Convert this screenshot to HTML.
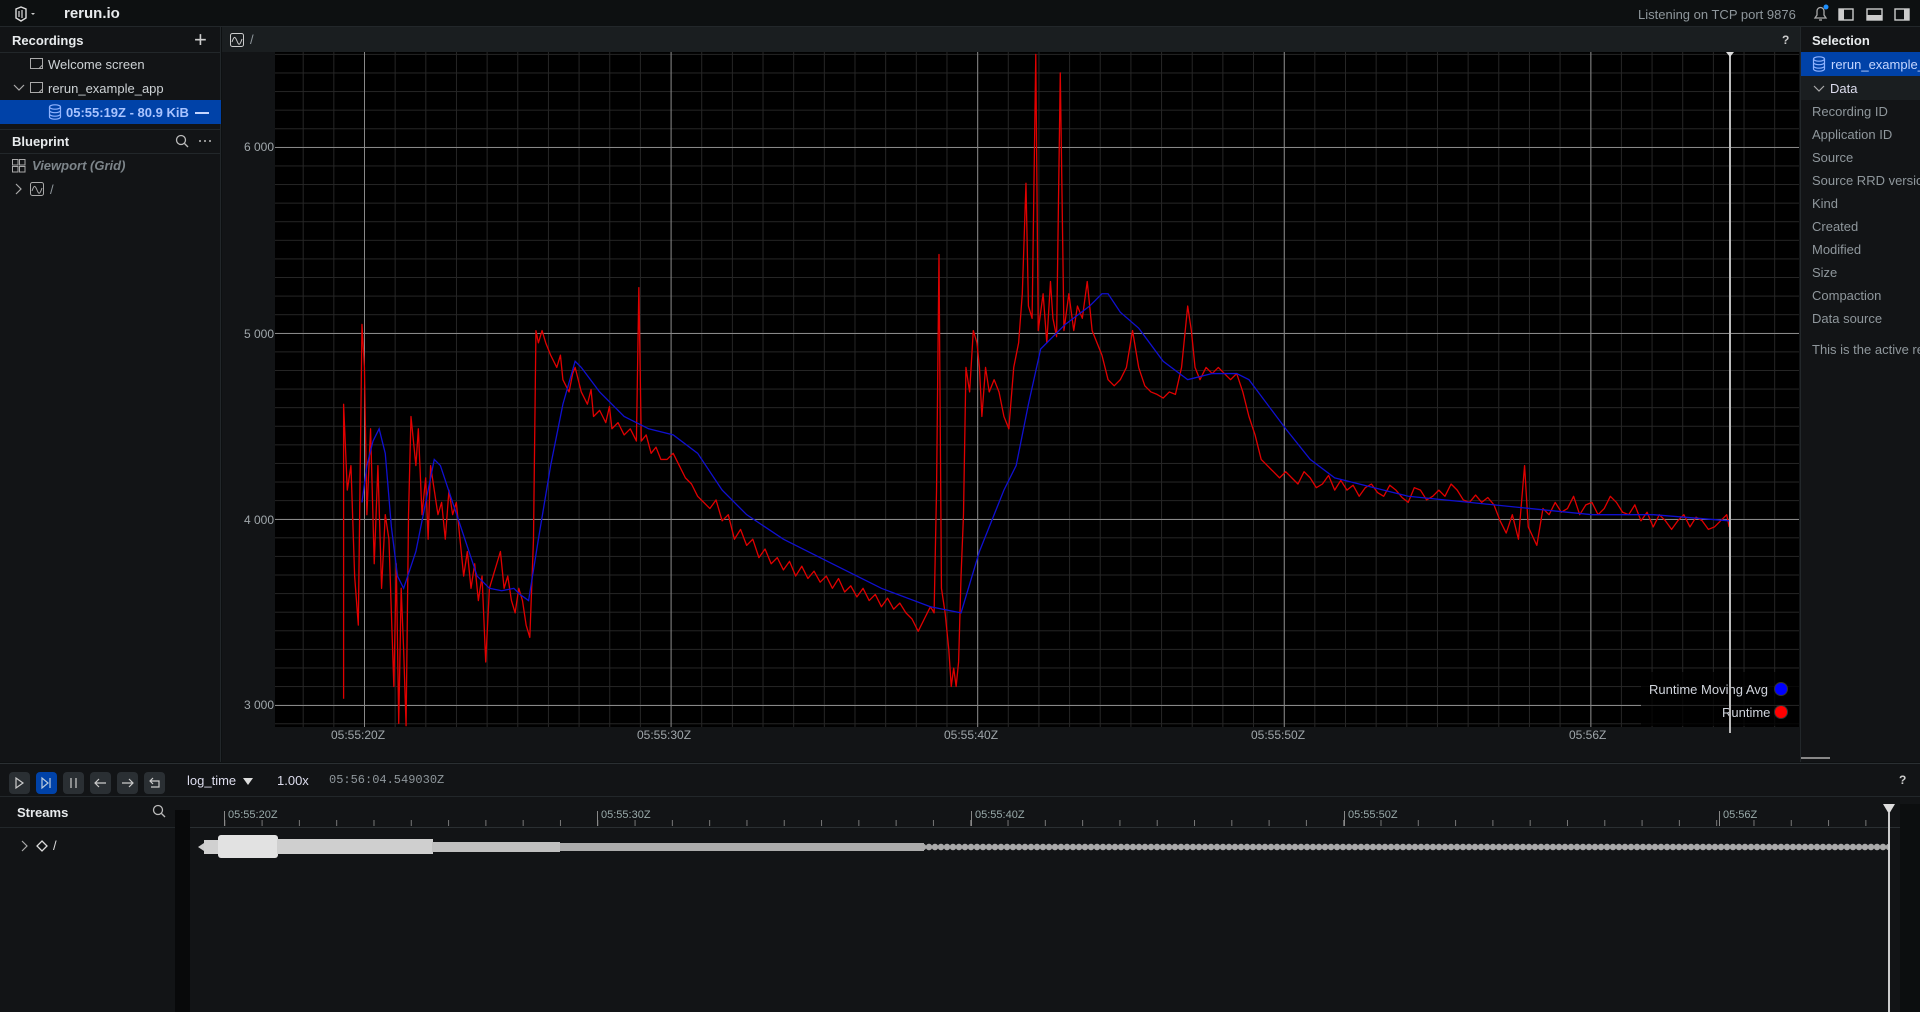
<!DOCTYPE html>
<html><head><meta charset="utf-8"><style>
*{box-sizing:border-box;margin:0;padding:0}
body{width:1920px;height:1012px;overflow:hidden;background:#0d1011;font-family:"Liberation Sans",sans-serif;font-size:13px;color:#cdd2d5;position:relative}
.a{position:absolute}
.t{position:absolute;white-space:nowrap}
.hdr{color:#e8ebed;font-weight:bold}
.dim{color:#8f979c}
</style></head><body>
<!-- top bar -->
<div class="a" style="left:0;top:0;width:1920px;height:27px;background:#0d1011;border-bottom:1px solid #22272a"></div>
<svg class="a" style="left:14px;top:6px" width="24" height="16" viewBox="0 0 24 16"><path d="M2 3l5-2 5 2v9l-5 3-5-3z" fill="none" stroke="#ddd" stroke-width="1.4"/><path d="M5 5v6M8 4v8" stroke="#ddd" stroke-width="1.2"/><path d="M17 7l2 2 2-2z" fill="#ccc"/></svg>
<div class="t hdr" style="left:64px;top:5px;font-size:15px">rerun.io</div>
<div class="t dim" style="left:1638px;top:7px;font-size:13px">Listening on TCP port 9876</div>
<svg class="a" style="left:1810px;top:3px" width="110" height="22" viewBox="0 0 110 22"><path d="M5 15h11l-2-3V8a3.5 3.5 0 0 0-7 0v4z M9 17h3" fill="none" stroke="#aaa" stroke-width="1.3"/><circle cx="16" cy="4" r="2.5" fill="#1e90ff"/><rect x="29" y="6" width="14" height="11" fill="none" stroke="#ccc" stroke-width="1.4"/><rect x="29" y="6" width="5" height="11" fill="#ccc"/><rect x="57" y="6" width="15" height="11" fill="none" stroke="#ccc" stroke-width="1.4"/><rect x="57" y="12" width="15" height="5" fill="#ccc"/><rect x="85" y="6" width="14" height="11" fill="none" stroke="#ccc" stroke-width="1.4"/><rect x="94" y="6" width="5" height="11" fill="#ccc"/></svg>

<!-- left panel -->
<div class="a" style="left:0;top:27px;width:221px;height:735px;background:#121416;border-right:1px solid #22272a"></div>
<div class="a" style="left:0;top:52px;width:221px;height:1px;background:#22272a"></div>
<div class="t hdr" style="left:12px;top:33px">Recordings</div>
<div class="t" style="left:194px;top:27px;font-size:22px;color:#ccc">+</div>
<svg class="a" style="left:30px;top:58px" width="14" height="12"><rect x="0.5" y="0.5" width="12" height="10" fill="none" stroke="#aaa"/><path d="M9 10.5l3.5-3.5" stroke="#aaa"/></svg>
<div class="t" style="left:48px;top:57px">Welcome screen</div>
<svg class="a" style="left:13px;top:83px" width="12" height="10"><path d="M1 2l5 5 5-5" fill="none" stroke="#aaa" stroke-width="1.2"/></svg>
<svg class="a" style="left:30px;top:82px" width="14" height="12"><rect x="0.5" y="0.5" width="12" height="10" fill="none" stroke="#aaa"/><path d="M9 10.5l3.5-3.5" stroke="#aaa"/></svg>
<div class="t" style="left:48px;top:81px">rerun_example_app</div>
<div class="a" style="left:0;top:100px;width:221px;height:24px;background:#0042a8"></div>
<svg class="a" style="left:48px;top:104px" width="14" height="16"><ellipse cx="7" cy="3" rx="5.5" ry="2.2" fill="none" stroke="#8fb3ff" stroke-width="1.2"/><path d="M1.5 3v10c0 1.2 2.5 2.2 5.5 2.2s5.5-1 5.5-2.2V3M1.5 6.5c0 1.2 2.5 2.2 5.5 2.2s5.5-1 5.5-2.2M1.5 10c0 1.2 2.5 2.2 5.5 2.2s5.5-1 5.5-2.2" fill="none" stroke="#8fb3ff" stroke-width="1.2"/></svg>
<div class="t" style="left:66px;top:105px;color:#a9c4ff;font-weight:bold">05:55:19Z - 80.9 KiB</div>
<div class="a" style="left:195px;top:112px;width:14px;height:1.5px;background:#c5d6ff"></div>
<div class="a" style="left:0;top:129px;width:221px;height:1px;background:#22272a"></div>
<div class="a" style="left:0;top:153px;width:221px;height:1px;background:#22272a"></div>
<div class="t hdr" style="left:12px;top:134px">Blueprint</div>
<svg class="a" style="left:174px;top:133px" width="40" height="16"><circle cx="7" cy="7" r="4.5" fill="none" stroke="#bbb" stroke-width="1.3"/><path d="M10.5 10.5l3.5 3.5" stroke="#bbb" stroke-width="1.3"/><circle cx="26" cy="8" r="1" fill="#bbb"/><circle cx="31" cy="8" r="1" fill="#bbb"/><circle cx="36" cy="8" r="1" fill="#bbb"/></svg>
<svg class="a" style="left:12px;top:159px" width="14" height="14"><rect x="0.5" y="0.5" width="5.5" height="5.5" fill="none" stroke="#aaa"/><rect x="7.5" y="0.5" width="5.5" height="5.5" fill="none" stroke="#aaa"/><rect x="0.5" y="7.5" width="5.5" height="5.5" fill="none" stroke="#aaa"/><rect x="7.5" y="7.5" width="5.5" height="5.5" fill="none" stroke="#aaa"/></svg>
<div class="t dim" style="left:32px;top:158px;font-style:italic;font-weight:bold;color:#7d858a">Viewport (Grid)</div>
<svg class="a" style="left:14px;top:183px" width="10" height="12"><path d="M2 1l5 5-5 5" fill="none" stroke="#aaa" stroke-width="1.2"/></svg>
<svg class="a" style="left:30px;top:182px" width="14" height="14"><rect x="0.5" y="0.5" width="13" height="13" rx="2" fill="none" stroke="#aaa"/><path d="M2 9c2-6 3-6 5-1s3 4 5-2" fill="none" stroke="#aaa"/></svg>
<div class="t dim" style="left:50px;top:182px">/</div>

<!-- plot tab -->
<div class="a" style="left:222px;top:27px;width:1578px;height:25px;background:#1a1e20"></div>
<svg class="a" style="left:230px;top:33px" width="14" height="14"><rect x="0.5" y="0.5" width="13" height="13" rx="2" fill="none" stroke="#ccc"/><path d="M2 9c2-6 3-6 5-1s3 4 5-2" fill="none" stroke="#ccc"/></svg>
<div class="t dim" style="left:250px;top:32px">/</div>
<div class="t" style="left:1782px;top:33px;font-size:12px;font-weight:bold;color:#ccc">?</div>
<div class="a" style="left:222px;top:52px;width:1578px;height:710px;background:#121416"></div>
<!-- plot area -->
<div class="a" style="left:275px;top:52px;width:1524px;height:675px;background-color:#000;
background-image:
linear-gradient(to right,#888 1.2px,transparent 1.2px),
linear-gradient(to bottom,#888 1.2px,transparent 1.2px),
linear-gradient(to right,#262626 1px,transparent 1px),
linear-gradient(to bottom,#262626 1px,transparent 1px);
background-size:306.6px 100%,100% 186px,30.66px 100%,100% 18.6px;
background-position:89px 0,0 95px,27.7px 0,0 1.9px"></div>
<div class="t dim" style="left:232px;top:140px;font-size:12px;width:42px;text-align:right;color:#a0a7ab">6 000</div>
<div class="t dim" style="left:232px;top:327px;font-size:12px;width:42px;text-align:right;color:#a0a7ab">5 000</div>
<div class="t dim" style="left:232px;top:513px;font-size:12px;width:42px;text-align:right;color:#a0a7ab">4 000</div>
<div class="t dim" style="left:232px;top:698px;font-size:12px;width:42px;text-align:right;color:#a0a7ab">3 000</div>
<div class="t" style="left:331px;top:728px;font-size:12px;color:#a0a7ab">05:55:20Z</div>
<div class="t" style="left:637px;top:728px;font-size:12px;color:#a0a7ab">05:55:30Z</div>
<div class="t" style="left:944px;top:728px;font-size:12px;color:#a0a7ab">05:55:40Z</div>
<div class="t" style="left:1251px;top:728px;font-size:12px;color:#a0a7ab">05:55:50Z</div>
<div class="t" style="left:1569px;top:728px;font-size:12px;color:#a0a7ab">05:56Z</div>
<svg class="a" style="left:275px;top:52px" width="1524" height="675" viewBox="225 43 1244 550" preserveAspectRatio="none">
<polyline vector-effect="non-scaling-stroke" fill="none" stroke="#e00000" stroke-width="1.3" stroke-linejoin="round" points="281,570 281,330 284,400 287,380 290,470 293,510 296,265 298,300 300,420 303,350 306,460 309,380 312,480 315,420 318,440 320,500 322,560 324,460 326,590 328,480 330,530 332,592 334,420 336,340 338,360 340,380 342,350 345,420 348,390 350,440 352,380 355,400 358,420 361,410 364,440 367,400 370,420 373,410 376,440 379,470 382,450 385,480 388,460 391,490 394,470 397,540 400,480 403,470 406,460 409,450 412,480 415,470 418,490 421,500 424,480 427,490 430,510 433,520 436,440 438,270 440,280 443,270 446,280 450,290 455,300 458,290 460,310 465,320 468,305 470,300 475,320 480,330 483,318 485,340 490,335 495,345 498,332 500,350 505,345 510,355 515,350 520,360 522,235 524,360 528,355 532,370 536,365 540,375 545,375 550,370 555,380 560,390 565,395 570,405 575,410 580,415 585,408 590,425 595,420 600,440 605,432 610,445 615,440 620,455 625,448 630,460 635,455 640,465 645,458 650,470 655,462 660,472 665,466 670,475 675,470 680,480 685,472 690,483 695,478 700,487 705,480 710,490 715,485 720,495 725,488 730,497 735,492 740,500 745,505 750,515 755,505 760,495 763,500 765,400 767,208 769,480 772,500 775,530 777,560 779,545 781,560 783,540 785,470 787,420 789,300 792,320 795,270 798,280 800,300 802,340 805,300 808,320 812,310 816,320 820,340 824,350 828,300 832,280 835,240 838,150 840,250 843,260 846,45 848,270 852,240 855,280 858,230 860,260 863,275 866,60 869,270 873,240 877,270 880,250 884,260 888,230 892,270 896,280 900,290 905,310 910,315 915,310 920,300 925,270 930,300 935,315 940,320 945,322 950,325 955,320 960,322 965,300 970,250 973,270 976,300 980,310 985,300 990,305 995,300 1000,305 1005,310 1010,305 1015,320 1020,340 1025,355 1030,375 1035,380 1040,385 1045,390 1050,385 1055,390 1060,395 1065,385 1070,390 1075,398 1080,395 1085,388 1090,400 1095,392 1100,400 1105,396 1110,405 1115,398 1120,395 1125,402 1130,405 1135,396 1140,400 1145,406 1150,410 1155,398 1160,400 1165,408 1170,405 1175,400 1180,405 1185,395 1190,400 1195,408 1200,410 1205,404 1210,410 1215,406 1220,412 1225,425 1230,435 1235,420 1240,440 1245,380 1248,430 1255,445 1260,415 1265,420 1270,410 1275,418 1280,415 1285,405 1290,420 1295,412 1300,410 1305,420 1310,415 1315,405 1320,410 1325,418 1330,420 1335,412 1340,425 1345,418 1350,430 1355,420 1360,425 1365,432 1370,425 1375,420 1380,430 1385,422 1390,425 1395,432 1400,430 1405,425 1410,420 1412,430"/>
<polyline vector-effect="non-scaling-stroke" fill="none" stroke="#1010d0" stroke-width="1.3" points="296,410 300,380 305,360 310,350 315,370 320,430 325,470 330,480 340,450 350,400 355,375 360,380 370,410 380,440 390,470 400,480 410,482 420,480 425,485 432,490 440,440 450,380 460,330 470,295 475,300 490,320 510,340 530,350 550,355 570,370 590,400 610,420 640,440 680,460 720,480 760,495 785,500 800,450 820,400 830,380 840,330 850,285 870,265 890,250 900,240 905,240 915,255 930,268 950,295 970,310 990,305 1010,305 1020,310 1035,330 1050,350 1070,375 1090,390 1110,395 1130,400 1150,405 1200,410 1250,415 1300,420 1350,420 1412,425"/>
</svg>
<div class="a" style="left:1641px;top:672px;width:158px;height:54px;background:rgba(0,0,0,0.75)"></div>
<div class="t" style="left:1649px;top:682px;font-size:13px;color:#d0d4dc">Runtime Moving Avg</div>
<div class="a" style="left:1774px;top:682px;width:14px;height:14px;border-radius:50%;background:#0000ff;border:1px solid #333"></div>
<div class="t" style="left:1722px;top:705px;font-size:13px;color:#d0d4dc">Runtime</div>
<div class="a" style="left:1774px;top:705px;width:14px;height:14px;border-radius:50%;background:#ff0000;border:1px solid #333"></div>
<div class="a" style="left:1729px;top:55px;width:2px;height:678px;background:#bbb"></div>
<div class="a" style="left:1726px;top:52px;width:0;height:0;border-left:4px solid transparent;border-right:4px solid transparent;border-top:5px solid #ddd"></div>

<!-- right panel -->
<div class="a" style="left:1800px;top:27px;width:120px;height:735px;background:#121416;border-left:1px solid #22272a"></div>
<div class="t hdr" style="left:1812px;top:33px">Selection</div>
<div class="a" style="left:1801px;top:52px;width:119px;height:24px;background:#0042a8"></div>
<svg class="a" style="left:1812px;top:56px" width="14" height="16"><ellipse cx="7" cy="3" rx="5.5" ry="2.2" fill="none" stroke="#8fb3ff" stroke-width="1.2"/><path d="M1.5 3v10c0 1.2 2.5 2.2 5.5 2.2s5.5-1 5.5-2.2V3M1.5 6.5c0 1.2 2.5 2.2 5.5 2.2s5.5-1 5.5-2.2M1.5 10c0 1.2 2.5 2.2 5.5 2.2s5.5-1 5.5-2.2" fill="none" stroke="#8fb3ff" stroke-width="1.2"/></svg>
<div class="t" style="left:1831px;top:57px;color:#c5d6ff">rerun_example_app</div>
<div class="a" style="left:1801px;top:76px;width:119px;height:24px;background:#1a1e20"></div>
<svg class="a" style="left:1813px;top:84px" width="12" height="10"><path d="M1 2l5 5 5-5" fill="none" stroke="#aaa" stroke-width="1.2"/></svg>
<div class="t" style="left:1830px;top:81px;color:#dde">Data</div>
<div class="t dim" style="left:1812px;top:104px">Recording ID</div>
<div class="t dim" style="left:1812px;top:127px">Application ID</div>
<div class="t dim" style="left:1812px;top:150px">Source</div>
<div class="t dim" style="left:1812px;top:173px">Source RRD version</div>
<div class="t dim" style="left:1812px;top:196px">Kind</div>
<div class="t dim" style="left:1812px;top:219px">Created</div>
<div class="t dim" style="left:1812px;top:242px">Modified</div>
<div class="t dim" style="left:1812px;top:265px">Size</div>
<div class="t dim" style="left:1812px;top:288px">Compaction</div>
<div class="t dim" style="left:1812px;top:311px">Data source</div>
<div class="t dim" style="left:1812px;top:342px">This is the active recording</div>
<div class="a" style="left:1801px;top:757px;width:29px;height:2px;background:#888"></div>

<!-- bottom timeline -->
<div class="a" style="left:0;top:763px;width:1920px;height:249px;background:#121416;border-top:1px solid #2a2f32"></div>
<div class="a" style="left:0;top:796px;width:1920px;height:1px;background:#22272a"></div>
<svg class="a" style="left:8px;top:772px" width="160" height="24">
<rect x="1" y="0" width="21" height="22" rx="4" fill="#2a2f33"/><path d="M8 6v10l7-5z" fill="none" stroke="#ccc" stroke-width="1.2"/>
<rect x="28" y="0" width="21" height="22" rx="4" fill="#0042a8"/><path d="M34 6v10l6-5z M42 6v10" fill="none" stroke="#bcd" stroke-width="1.2"/>
<rect x="55" y="0" width="21" height="22" rx="4" fill="#2a2f33"/><path d="M63 6v10M68 6v10" stroke="#ccc" stroke-width="1.2"/>
<rect x="82" y="0" width="21" height="22" rx="4" fill="#2a2f33"/><path d="M98 11h-11M91 7l-4 4 4 4" fill="none" stroke="#ccc" stroke-width="1.2"/>
<rect x="109" y="0" width="21" height="22" rx="4" fill="#2a2f33"/><path d="M114 11h11M121 7l4 4-4 4" fill="none" stroke="#ccc" stroke-width="1.2"/>
<rect x="136" y="0" width="21" height="22" rx="4" fill="#2a2f33"/><path d="M142 9h9v6h-8M145 6l-3 3 3 3" fill="none" stroke="#ccc" stroke-width="1.2"/>
</svg>
<div class="t" style="left:187px;top:773px;color:#dde">log_time</div>
<div class="a" style="left:243px;top:778px;width:0;height:0;border-left:5px solid transparent;border-right:5px solid transparent;border-top:7px solid #ddd"></div>
<div class="t" style="left:277px;top:773px;color:#dde">1.00x</div>
<div class="t" style="left:329px;top:773px;font-family:'Liberation Mono',monospace;font-size:12px;color:#8f979c">05:56:04.549030Z</div>
<div class="t" style="left:1899px;top:773px;font-size:12px;font-weight:bold;color:#ccc">?</div>
<div class="t hdr" style="left:17px;top:805px">Streams</div>
<svg class="a" style="left:151px;top:803px" width="16" height="16"><circle cx="7" cy="7" r="4.5" fill="none" stroke="#bbb" stroke-width="1.3"/><path d="M10.5 10.5l3.5 3.5" stroke="#bbb" stroke-width="1.3"/></svg>
<div class="a" style="left:0;top:827px;width:175px;height:1px;background:#22272a"></div>
<svg class="a" style="left:20px;top:840px" width="10" height="12"><path d="M2 1l5 5-5 5" fill="none" stroke="#aaa" stroke-width="1.2"/></svg>
<svg class="a" style="left:36px;top:840px" width="12" height="12"><path d="M6 1l5 5-5 5-5-5z" fill="none" stroke="#ddd" stroke-width="1.3"/></svg>
<div class="t" style="left:53px;top:838px;color:#ddd">/</div>
<div class="a" style="left:175px;top:810px;width:15px;height:202px;background:#08090a"></div>
<!-- ruler -->
<div class="a" style="left:190px;top:827px;width:1710px;height:1px;background:#2a2f32"></div>
<div class="a" style="left:190px;top:810px;width:1710px;height:16px;background-image:linear-gradient(to right,#777 1px,transparent 1px);background-size:37.3px 6px;background-position:-3px 10px;background-repeat:repeat-x"></div>
<div class="a" style="left:224px;top:811px;width:1px;height:15px;background:#888"></div>
<div class="a" style="left:597px;top:811px;width:1px;height:15px;background:#888"></div>
<div class="a" style="left:971px;top:811px;width:1px;height:15px;background:#888"></div>
<div class="a" style="left:1344px;top:811px;width:1px;height:15px;background:#888"></div>
<div class="a" style="left:1719px;top:811px;width:1px;height:15px;background:#888"></div>
<div class="t" style="left:228px;top:809px;font-size:11px;color:#9aa">05:55:20Z</div>
<div class="t" style="left:601px;top:809px;font-size:11px;color:#9aa">05:55:30Z</div>
<div class="t" style="left:975px;top:809px;font-size:11px;color:#9aa">05:55:40Z</div>
<div class="t" style="left:1348px;top:809px;font-size:11px;color:#9aa">05:55:50Z</div>
<div class="t" style="left:1723px;top:809px;font-size:11px;color:#9aa">05:56Z</div>
<!-- data bar -->
<div class="a" style="left:198px;top:843px;width:0;height:0;border-top:4px solid transparent;border-bottom:4px solid transparent;border-right:6px solid #ccc"></div>
<div class="a" style="left:204px;top:840px;width:16px;height:14px;background:#d0d0d0"></div>
<div class="a" style="left:218px;top:835px;width:60px;height:23px;background:#e2e2e2;border-radius:3px"></div>
<div class="a" style="left:277px;top:839px;width:156px;height:15px;background:#cfcfcf"></div>
<div class="a" style="left:432px;top:842px;width:128px;height:10px;background:#c0c0c0"></div>
<div class="a" style="left:560px;top:843px;width:364px;height:8px;background:#acacac"></div>
<div class="a" style="left:920px;top:843px;width:970px;height:8px;background-image:radial-gradient(circle,#aaa 3px,transparent 3.5px);background-size:6px 8px"></div>
<div class="a" style="left:1888px;top:838px;width:2px;height:174px;background:#ccc"></div>
<div class="a" style="left:1883px;top:804px;width:0;height:0;border-left:6px solid transparent;border-right:6px solid transparent;border-top:10px solid #ddd"></div>
<div class="a" style="left:1888px;top:812px;width:2px;height:30px;background:#ccc"></div>
<div class="a" style="left:1900px;top:804px;width:20px;height:208px;background:#0c0e0f"></div>
</body></html>
